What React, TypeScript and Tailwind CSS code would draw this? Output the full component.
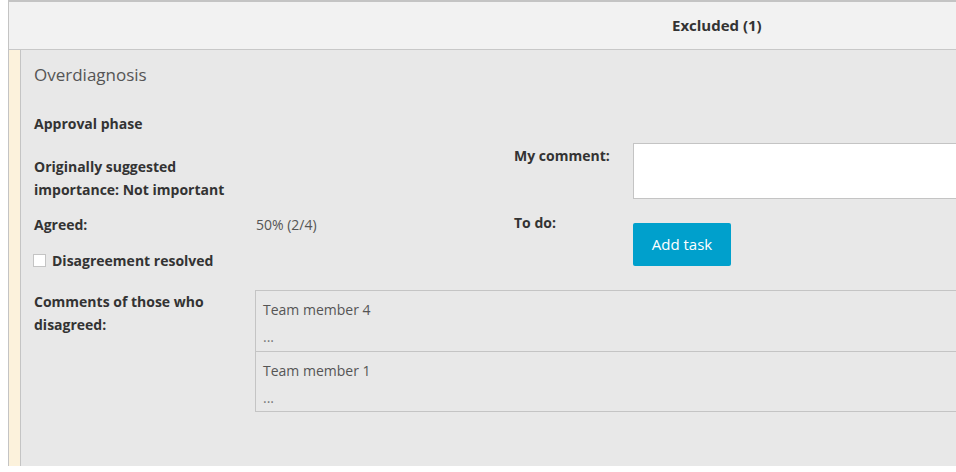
import React from 'react';

const comments = [
  { id: 4, name: 'Team member 4', text: '...' },
  { id: 1, name: 'Team member 1', text: '...' },
];

export default function App() {
  return (
    <div
      className="w-[956px] h-[472px] overflow-hidden bg-white text-[14px] text-[#333]"
      style={{ fontFamily: '"Open Sans", "Liberation Sans", sans-serif' }}
    >
      <div className="ml-[8px] w-[1000px] h-[466px] flex flex-col border-l border-t-2 border-[#c4c4c4]">
        {/* Header */}
        <div className="h-[48px] shrink-0 bg-[#f2f2f2] border-b border-[#c8c8c8] flex items-center">
          <div className="w-[663px] shrink-0" />
          <span className="font-bold text-[15px] text-[#333]">Excluded (1)</span>
        </div>

        {/* Body */}
        <div className="flex flex-1">
          <div className="w-[11px] shrink-0 bg-[#fcf2dc]" />
          <div className="flex-1 bg-[#e8e8e8] border-l border-[#c4c4c4] pl-[13px] pt-[14px]">
            <h2 className="text-[17px] leading-[22px] text-[#555]">Overdiagnosis</h2>
            <p className="mt-[28px] font-bold leading-[20px]">Approval phase</p>

            <div className="flex mt-[21px]">
              <div className="w-[480px] shrink-0">
                <p className="font-bold leading-[23px]">
                  Originally suggested
                  <br />
                  importance: Not important
                </p>
                <div className="flex mt-[12px] leading-[23px]">
                  <span className="w-[222px] shrink-0 font-bold">Agreed:</span>
                  <span className="text-[#555]">50% (2/4)</span>
                </div>
                <label className="flex items-center mt-[13px] leading-[23px] font-bold">
                  <span className="w-[13px] h-[13px] bg-white border border-[#c4c4c4] mr-[6px] ml-[-1px]" />
                  Disagreement resolved
                </label>
              </div>

              <div className="flex-1 -mt-[12px]">
                <div className="flex">
                  <span className="w-[119px] shrink-0 font-bold leading-[23px] mt-[1px]">My comment:</span>
                  <div className="flex-1 h-[56px] bg-white border border-[#c4c4c4]" />
                </div>
                <div className="flex mt-[12px]">
                  <span className="w-[119px] shrink-0 font-bold leading-[23px]">To do:</span>
                  <button className="mt-[12px] h-[43px] w-[98px] rounded-[2px] bg-[#00a0cc] text-white text-[15px]">
                    Add task
                  </button>
                </div>
              </div>
            </div>

            <div className="flex mt-[18px]">
              <p className="w-[221px] shrink-0 font-bold leading-[23px]">
                Comments of those who
                <br />
                disagreed:
              </p>
              <div className="flex-1 border border-[#c4c4c4]">
                {comments.map((c, i) => (
                  <div
                    key={c.id}
                    className={`pl-[7px] pt-[8px] text-[#555] ${i > 0 ? 'border-t border-[#c4c4c4] pb-[2px]' : 'pb-[3px]'}`}
                  >
                    <div className="leading-[22px]">{c.name}</div>
                    <div className="leading-[22px] mt-[5px] text-[#777]">{c.text}</div>
                  </div>
                ))}
              </div>
            </div>
          </div>
        </div>
      </div>
    </div>
  );
}
